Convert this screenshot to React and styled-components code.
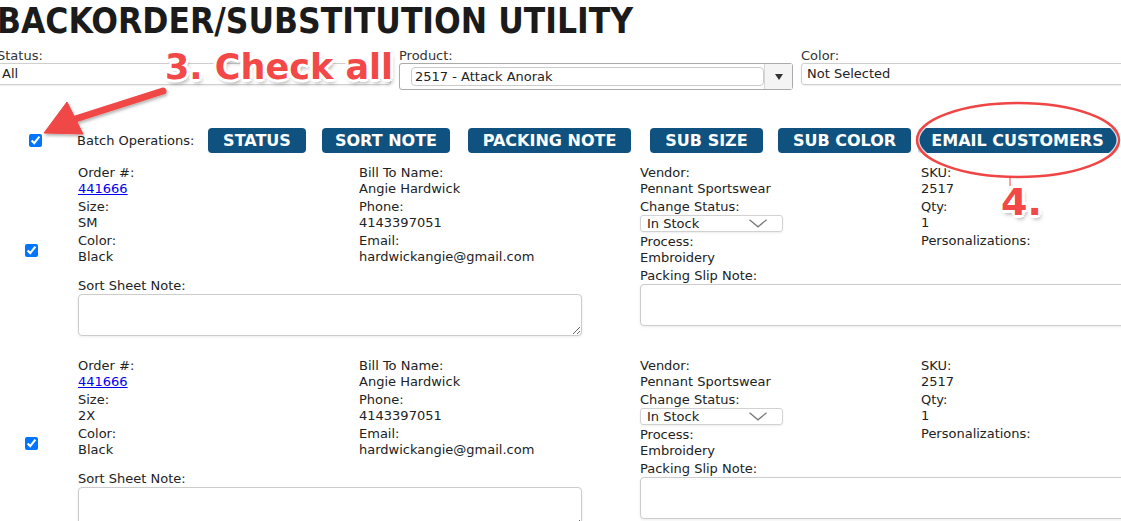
import styled, { createGlobalStyle } from 'styled-components';

const GlobalStyle = createGlobalStyle`
  body {
    margin: 0;
    background: #fff;
    overflow: hidden;
    font-family: "DejaVu Sans", Verdana, sans-serif;
    font-size: 13px;
    color: #222;
  }
`;

const Page = styled.div`
  position: relative;
  width: 1190px;
  margin-left: -3px;
`;

const Title = styled.h1`
  margin: 0;
  font-family: "DejaVu Sans", Verdana, sans-serif;
  font-stretch: condensed;
  font-weight: bold;
  font-size: 35px;
  line-height: 42px;
  color: #1b1b1b;
  white-space: nowrap;
`;

const Filters = styled.div`
  display: grid;
  grid-template-columns: 394px 394px 394px;
  column-gap: 8px;
  margin-top: 7px;
`;

const FilterLabel = styled.label`
  display: block;
  line-height: 14px;
  color: #333;
`;

const PlainSelect = styled.div`
  height: 22px;
  box-sizing: border-box;
  border: 1px solid #cfcfcf;
  border-radius: 3px;
  padding-left: ${(p) => p.$pad}px;
  line-height: 20px;
  color: #222;
  box-shadow: 0 1px 2px rgba(0, 0, 0, 0.08);
`;

const ComboBox = styled.div`
  display: flex;
  height: 27px;
  box-sizing: border-box;
  border: 1px solid #aaa;
  border-radius: 3px;
  background: #fff;
`;

const ComboField = styled.div`
  flex: 1;
  margin: 3px 0 3px 11px;
  border: 1px solid #ccc;
  border-radius: 4px;
  padding-left: 3px;
  line-height: 17px;
  color: #222;
`;

const ComboArrow = styled.div`
  width: 27px;
  display: flex;
  align-items: center;
  justify-content: center;
  border-left: 1px solid #d6d6d6;
  background: #f4f4f4;
`;

const BatchRow = styled.div`
  display: flex;
  align-items: center;
  margin-top: 38px;
  height: 25px;
`;

const Check = styled.input.attrs({ type: 'checkbox', defaultChecked: true })`
  width: 13px;
  height: 13px;
  margin: 0 0 0 ${(p) => p.$offset}px;
  accent-color: #0075ff;
`;

const BatchLabel = styled.span`
  margin-left: 35px;
  width: 131px;
`;

const Buttons = styled.div`
  display: flex;
`;

const ActionButton = styled.button`
  position: relative;
  width: ${(p) => p.$w}px;
  margin-left: ${(p) => p.$gap || 0}px;
  height: 25px;
  padding: 0;
  border: none;
  border-radius: 4px;
  background: #10527f;
  color: #fff;
  font-family: "DejaVu Sans", Verdana, sans-serif;
  font-weight: bold;
  font-size: 16px;
  line-height: 25px;
  white-space: nowrap;
`;

const Records = styled.div`
  display: flex;
  flex-direction: column;
  gap: 22px;
  margin-top: 12px;
`;

const Record = styled.div`
  display: flex;
  align-items: center;
`;

const CheckCell = styled.div`
  width: 81px;
  flex-shrink: 0;
  display: flex;
`;

const RecordBody = styled.div`
  display: flex;
`;

const Half = styled.div`
  width: 562px;
`;

const FieldGrid = styled.div`
  display: grid;
  grid-template-columns: 281px 281px;
`;

const Field = styled.div`
  margin-bottom: 2px;
`;

const Line = styled.div`
  line-height: 16px;
  min-height: 16px;
  white-space: nowrap;
`;

const OrderLink = styled.a`
  color: #0000ee;
  text-decoration: underline;
`;

const StatusSelect = styled.div`
  width: 143px;
  height: 17px;
  box-sizing: border-box;
  display: flex;
  align-items: center;
  justify-content: space-between;
  padding: 0 15px 0 6px;
  border: 1px solid #d2d2d2;
  border-radius: 3px;
  box-shadow: 0 1px 2px rgba(0, 0, 0, 0.08);
  line-height: 15px;
`;

const NoteLabel = styled.div`
  margin-top: ${(p) => p.$gap}px;
  line-height: 16px;
`;

const NoteArea = styled.textarea`
  display: block;
  width: 504px;
  height: 42px;
  box-sizing: border-box;
  margin: 0;
  border: 1px solid #ccc;
  border-radius: 4px;
  box-shadow: 0 1px 3px rgba(0, 0, 0, 0.08);
  font-family: inherit;
`;

const CalloutText = styled.div`
  position: absolute;
  font-family: "DejaVu Sans", Verdana, sans-serif;
  font-weight: bold;
  font-size: ${(p) => p.$size}px;
  line-height: 1;
  color: #f24848;
  white-space: nowrap;
  text-shadow: 3px 0 0 #fff, -3px 0 0 #fff, 0 3px 0 #fff, 0 -3px 0 #fff,
    2px 2px 0 #fff, -2px 2px 0 #fff, 2px -2px 0 #fff, -2px -2px 0 #fff,
    2px 4px 4px rgba(0, 0, 0, 0.35);
`;

const Overlay = styled.svg`
  position: absolute;
  left: 0;
  top: 0;
  pointer-events: none;
  overflow: visible;
`;

const Ring = styled.svg`
  position: absolute;
  left: -5px;
  top: -27px;
  pointer-events: none;
  overflow: visible;
`;

function Chevron() {
  return (
    <svg width="18" height="9" viewBox="0 0 18 9">
      <polyline points="0.5,0.8 9,7.8 17.5,0.8" fill="none" stroke="#7a7a7a" strokeWidth="1.3" />
    </svg>
  );
}

function RecordRow({ size }) {
  return (
    <Record>
      <CheckCell>
        <Check $offset={28} />
      </CheckCell>
      <RecordBody>
        <Half>
          <FieldGrid>
            <div>
              <Field>
                <Line>Order #:</Line>
                <Line>
                  <OrderLink href="#">441666</OrderLink>
                </Line>
              </Field>
              <Field>
                <Line>Size:</Line>
                <Line>{size}</Line>
              </Field>
              <Field>
                <Line>Color:</Line>
                <Line>Black</Line>
              </Field>
            </div>
            <div>
              <Field>
                <Line>Bill To Name:</Line>
                <Line>Angie Hardwick</Line>
              </Field>
              <Field>
                <Line>Phone:</Line>
                <Line>4143397051</Line>
              </Field>
              <Field>
                <Line>Email:</Line>
                <Line>hardwickangie@gmail.com</Line>
              </Field>
            </div>
          </FieldGrid>
          <NoteLabel $gap={11}>Sort Sheet Note:</NoteLabel>
          <NoteArea />
        </Half>
        <Half>
          <FieldGrid>
            <div>
              <Field>
                <Line>Vendor:</Line>
                <Line>Pennant Sportswear</Line>
              </Field>
              <Field>
                <Line>Change Status:</Line>
                <StatusSelect>
                  <span>In Stock</span>
                  <Chevron />
                </StatusSelect>
              </Field>
              <Field>
                <Line>Process:</Line>
                <Line>Embroidery</Line>
              </Field>
            </div>
            <div>
              <Field>
                <Line>SKU:</Line>
                <Line>2517</Line>
              </Field>
              <Field>
                <Line>Qty:</Line>
                <Line>1</Line>
              </Field>
              <Field>
                <Line>Personalizations:</Line>
                <Line />
              </Field>
            </div>
          </FieldGrid>
          <NoteLabel $gap={0}>Packing Slip Note:</NoteLabel>
          <NoteArea />
        </Half>
      </RecordBody>
    </Record>
  );
}

export default function App() {
  return (
    <Page>
      <GlobalStyle />
      <Title>BACKORDER/SUBSTITUTION UTILITY</Title>
      <Filters>
        <div>
          <FilterLabel>Status:</FilterLabel>
          <PlainSelect $pad={4}>All</PlainSelect>
        </div>
        <div>
          <FilterLabel>Product:</FilterLabel>
          <ComboBox>
            <ComboField>2517 - Attack Anorak</ComboField>
            <ComboArrow>
              <svg width="8" height="6" viewBox="0 0 8 6">
                <polygon points="0,0 8,0 4,6" fill="#333" />
              </svg>
            </ComboArrow>
          </ComboBox>
        </div>
        <div>
          <FilterLabel>Color:</FilterLabel>
          <PlainSelect $pad={5}>Not Selected</PlainSelect>
        </div>
      </Filters>
      <BatchRow>
        <Check $offset={32} />
        <BatchLabel>Batch Operations:</BatchLabel>
        <Buttons>
          <ActionButton $w={98}>STATUS</ActionButton>
          <ActionButton $w={128} $gap={16}>SORT NOTE</ActionButton>
          <ActionButton $w={163} $gap={18}>PACKING NOTE</ActionButton>
          <ActionButton $w={113} $gap={19}>SUB SIZE</ActionButton>
          <ActionButton $w={133} $gap={15}>SUB COLOR</ActionButton>
          <ActionButton $w={199} $gap={7}>
            EMAIL CUSTOMERS
            <Ring width="210" height="80" viewBox="0 0 210 80">
              <ellipse cx="105" cy="39" rx="101" ry="37" fill="none" stroke="#fff" strokeWidth="5" opacity="0.8" />
              <ellipse cx="105" cy="39" rx="101" ry="37" fill="none" stroke="#f04545" strokeWidth="2.5" />
              <line x1="97" y1="76" x2="97" y2="85" stroke="#f04545" strokeWidth="1" />
            </Ring>
          </ActionButton>
        </Buttons>
      </BatchRow>
      <Records>
        <RecordRow size="SM" />
        <RecordRow size="2X" />
      </Records>

      <CalloutText $size={35} style={{ left: 168, top: 50 }}>3. Check all</CalloutText>
      <CalloutText $size={38} style={{ left: 1004, top: 183 }}>4.</CalloutText>
      <Overlay width="200" height="150" viewBox="0 0 200 150">
        <defs>
          <filter id="arrowShadow" x="-20%" y="-20%" width="140%" height="140%">
            <feDropShadow dx="1" dy="2" stdDeviation="1.5" floodColor="#000" floodOpacity="0.3" />
          </filter>
        </defs>
        <g filter="url(#arrowShadow)" fill="#f04646" stroke="#f04646">
          <line x1="166" y1="91" x2="72" y2="121" strokeWidth="7" strokeLinecap="round" />
          <polygon points="47,133 70,102 86,134" strokeWidth="1" strokeLinejoin="round" />
        </g>
      </Overlay>
    </Page>
  );
}
